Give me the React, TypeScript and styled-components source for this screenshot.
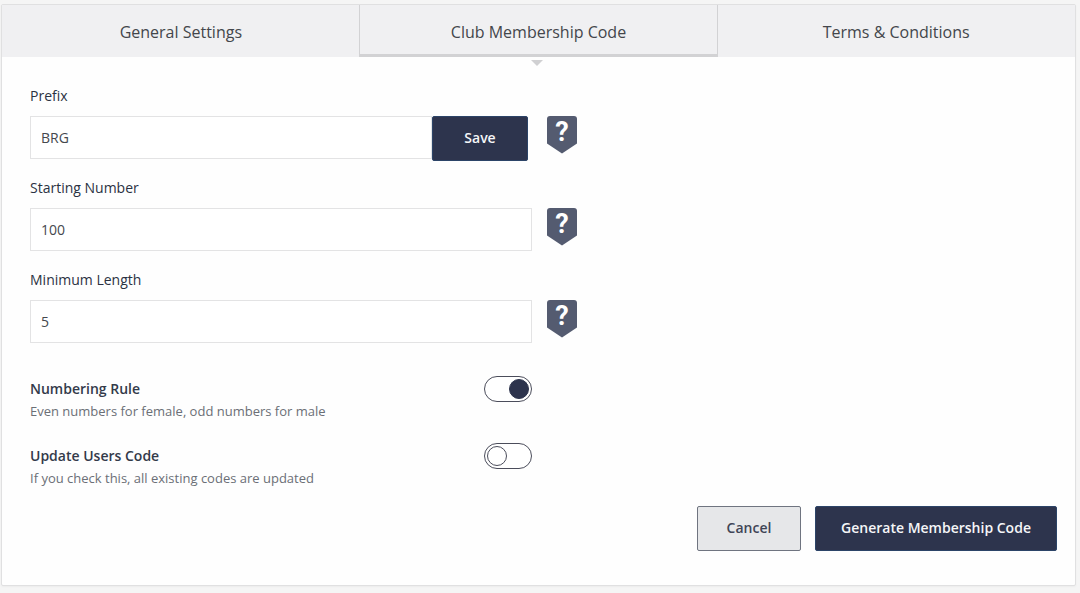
import React, { useState } from 'react';
import styled, { createGlobalStyle } from 'styled-components';

const navy = '#2d344d';

const GlobalStyle = createGlobalStyle`
  *, *::before, *::after { box-sizing: border-box; }
  body {
    margin: 0;
    padding: 4px 4px 8px 1px;
    background: #f5f5f5;
    color: #333a4a;
    font-family: "Open Sans", "Noto Sans", sans-serif;
    font-size: 14px;
    line-height: 20px;
  }
`;

const Card = styled.main`
  background: #fefefe;
  border: 1px solid #e0e0e1;
  border-radius: 2px;
  box-shadow: 0 1px 2px rgba(0, 0, 0, 0.04);
`;

const TabBar = styled.div`
  display: grid;
  grid-template-columns: repeat(3, 1fr);
  background: #f0f0f2;
`;

const Tab = styled.button`
  position: relative;
  height: 52px;
  margin: 0 -1px;
  padding: 4px 0 0;
  border: solid transparent;
  border-width: 0 1px 3px;
  background: none;
  color: #43464b;
  font: inherit;
  font-size: 16px;
  line-height: 24px;
  cursor: pointer;

  &[aria-selected='true'] {
    border-color: #d2d2d4;
  }

  &[aria-selected='true']::after {
    content: '';
    position: absolute;
    top: 100%;
    left: 50%;
    margin: 6px 0 0 -7px;
    border: solid transparent;
    border-width: 6px 6px 0;
    border-top-color: #d0d0d2;
  }
`;

const Form = styled.form`
  padding: 29px 18px 34px 28px;
`;

const Field = styled.div`
  max-width: 547px;
  margin-bottom: 19px;
`;

const Label = styled.label`
  display: block;
  margin-bottom: 10px;
  color: #2b3242;
  font-weight: 500;
`;

const FieldRow = styled.div`
  display: flex;
  gap: 15px;
`;

const Control = styled.div<{ $joined?: boolean }>`
  display: flex;
  flex: 1;
  height: 43px;
  padding-right: ${(p) => (p.$joined ? 4 : 0)}px;
`;

const TextBox = styled.input`
  flex: 1;
  min-width: 0;
  padding: 0 10px;
  border: 1px solid #e3e3e4;
  background: #fff;
  color: #45484e;
  font: inherit;
`;

const Button = styled.button<{ $quiet?: boolean; $width: number }>`
  flex: none;
  width: ${(p) => p.$width}px;
  height: 45px;
  padding: 0 0 1px;
  border: 1px solid ${(p) => (p.$quiet ? '#6f7480' : '#2c4468')};
  border-radius: 2px;
  background: ${(p) => (p.$quiet ? '#e6e7e9' : navy)};
  color: ${(p) => (p.$quiet ? '#3f4556' : '#f5f6f8')};
  font: inherit;
  font-weight: 600;
  cursor: pointer;
`;

const HelpButton = styled.button`
  flex: none;
  width: 30px;
  height: 38px;
  padding: 0;
  border: 0;
  background: none;
  cursor: pointer;

  svg { display: block; }
`;

const SettingList = styled.div`
  padding-top: 14px;
`;

const Setting = styled.div`
  display: flex;
  align-items: flex-start;
  justify-content: space-between;
  max-width: 502px;
  height: 44px;
  margin-bottom: 23px;

  &:last-child { margin-bottom: 19px; }
`;

const SettingTitle = styled.label`
  display: block;
  margin: 3px 0 2px;
  font-weight: 600;
`;

const SettingNote = styled.p`
  margin: 0;
  color: #6b6f76;
  font-size: 13px;
`;

const Switch = styled.input`
  appearance: none;
  flex: none;
  display: flex;
  align-items: center;
  width: 48px;
  height: 26px;
  margin: 0;
  padding: 0 2px;
  border: 1px solid #4b4d5b;
  border-radius: 13px;
  background: #fff;
  cursor: pointer;

  &::before {
    content: '';
    width: 20px;
    height: 20px;
    border: 1px solid #4b4d5b;
    border-radius: 50%;
  }

  &:checked { justify-content: flex-end; }
  &:checked::before { border-color: ${navy}; background: ${navy}; }
`;

const Actions = styled.div`
  display: flex;
  justify-content: flex-end;
  gap: 14px;
`;

function Help({ topic }: { topic: string }) {
  return (
    <HelpButton type="button" aria-label={`Help: ${topic}`}>
      <svg width="30" height="38" viewBox="0 0 30 38" aria-hidden="true">
        <path d="M3 0h24a3 3 0 0 1 3 3v24.5L15 37.500 0 27.500V3a3 3 0 0 1 3-3z" fill="#545b70" />
        <text x="15" y="25" textAnchor="middle" fontFamily="Roboto, sans-serif" fontWeight="700" fontSize="27" fill="#fff">?</text>
      </svg>
    </HelpButton>
  );
}

const tabs = ['General Settings', 'Club Membership Code', 'Terms & Conditions'];

const fields = [
  { id: 'prefix', label: 'Prefix', value: 'BRG', save: true },
  { id: 'start', label: 'Starting Number', value: '100', save: false },
  { id: 'length', label: 'Minimum Length', value: '5', save: false },
];

const settings = [
  { id: 'rule', title: 'Numbering Rule', note: 'Even numbers for female, odd numbers for male', on: true },
  { id: 'update', title: 'Update Users Code', note: 'If you check this, all existing codes are updated', on: false },
];

export default function App() {
  const [active, setActive] = useState(1);
  return (
    <>
      <GlobalStyle />
      <Card>
        <TabBar role="tablist">
          {tabs.map((name, i) => (
            <Tab key={name} type="button" role="tab" aria-selected={i === active} onClick={() => setActive(i)}>
              {name}
            </Tab>
          ))}
        </TabBar>
        <Form onSubmit={(e) => e.preventDefault()}>
          {fields.map((f) => (
            <Field key={f.id}>
              <Label htmlFor={f.id}>{f.label}</Label>
              <FieldRow>
                <Control $joined={f.save}>
                  <TextBox id={f.id} type="text" defaultValue={f.value} />
                  {f.save && <Button type="button" $width={96}>Save</Button>}
                </Control>
                <Help topic={f.label} />
              </FieldRow>
            </Field>
          ))}
          <SettingList>
            {settings.map((s) => (
              <Setting key={s.id}>
                <div>
                  <SettingTitle htmlFor={s.id}>{s.title}</SettingTitle>
                  <SettingNote>{s.note}</SettingNote>
                </div>
                <Switch id={s.id} type="checkbox" defaultChecked={s.on} />
              </Setting>
            ))}
          </SettingList>
          <Actions>
            <Button type="button" $quiet $width={104}>Cancel</Button>
            <Button type="submit" $width={242}>Generate Membership Code</Button>
          </Actions>
        </Form>
      </Card>
    </>
  );
}
